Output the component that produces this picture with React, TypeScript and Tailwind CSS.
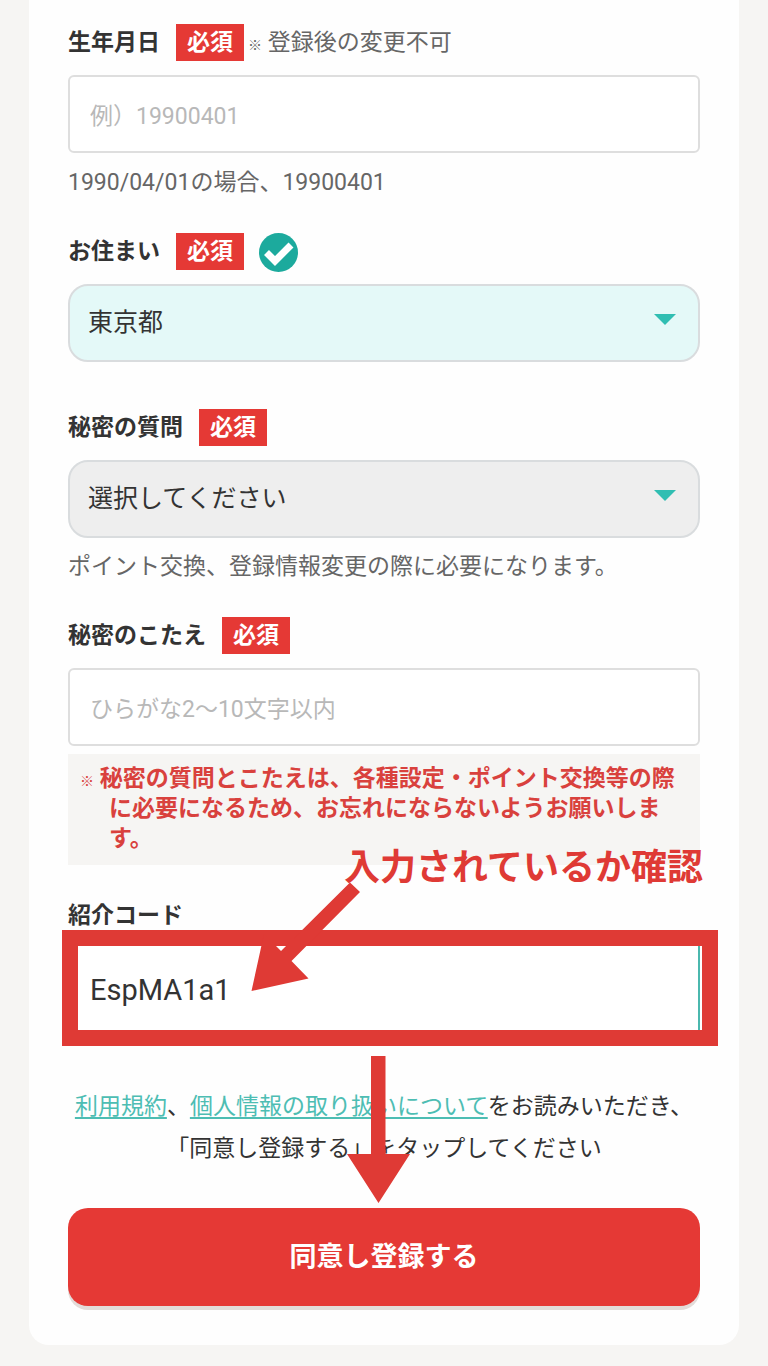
import { useState } from "react";
import type { ReactNode } from "react";

function RequiredBadge() {
  return (
    <span className="flex h-[37px] shrink-0 items-center bg-[#e53935] px-[11px] font-bold text-white">
      必須
    </span>
  );
}

function FieldHeader({ htmlFor, label, children }: { htmlFor: string; label: string; children?: ReactNode }) {
  return (
    <div className="mb-[14px] flex h-[37px] items-center gap-4">
      <label htmlFor={htmlFor} className="font-bold">
        {label}
      </label>
      <div className="flex items-center gap-1">
        <RequiredBadge />
        {children}
      </div>
    </div>
  );
}

function CheckMark() {
  return (
    <svg className="mt-px ml-[11px] h-[39px] w-[39px]" viewBox="0 0 39 39" aria-hidden="true">
      <circle cx="19.5" cy="19.5" r="19.5" fill="#1caa9d" />
      <path d="M7.5 19.5 L16 28 L32 12" fill="none" stroke="#fff" strokeWidth="7" />
    </svg>
  );
}

function SelectArrow() {
  return (
    <svg
      className="pointer-events-none absolute top-[30px] right-6 h-[11px] w-[22px]"
      viewBox="0 0 22 11"
      aria-hidden="true"
    >
      <path d="M0 0 H22 L11 11 Z" fill="#30beb2" />
    </svg>
  );
}

const textInput =
  "block h-[78px] w-full rounded-md border-2 border-[#dedede] bg-white px-5 pt-1 outline-none placeholder:text-[#b8b8b8]";
const selectBox =
  "block h-[78px] w-full appearance-none rounded-[20px] border-2 border-[#d9dcde] px-[18px] text-[25px] outline-none";

export default function App() {
  const [birthday, setBirthday] = useState("");
  const [prefecture, setPrefecture] = useState("東京都");
  const [question, setQuestion] = useState("");
  const [answer, setAnswer] = useState("");
  const [code, setCode] = useState("EspMA1a1");

  return (
    <div
      lang="ja"
      className="overflow-x-hidden bg-[#f6f5f3] px-[29px] pb-[21px] font-[Roboto,'Noto_Sans_CJK_JP',sans-serif] text-[23px] leading-[30px] text-[#333]"
    >
      <form
        className="rounded-b-[20px] bg-[#fefefe] px-[39px] pt-6 pb-[39px]"
        onSubmit={(e) => e.preventDefault()}
      >
        <div>
          <FieldHeader htmlFor="birthday" label="生年月日">
            <span className="text-[#666]">
              <span className="text-[14px] leading-none">※</span> 登録後の変更不可
            </span>
          </FieldHeader>
          <input
            id="birthday"
            className={textInput}
            placeholder="例）19900401"
            value={birthday}
            onChange={(e) => setBirthday(e.target.value)}
          />
          <p className="mt-[15px] text-[#666]">1990/04/01の場合、19900401</p>
        </div>

        <div className="mt-[35px]">
          <FieldHeader htmlFor="prefecture" label="お住まい">
            <CheckMark />
          </FieldHeader>
          <div className="relative">
            <select
              id="prefecture"
              className={`${selectBox} bg-[#e4f9f8]`}
              value={prefecture}
              onChange={(e) => setPrefecture(e.target.value)}
            >
              <option>東京都</option>
            </select>
            <SelectArrow />
          </div>
        </div>

        <div className="mt-[47px]">
          <FieldHeader htmlFor="question" label="秘密の質問" />
          <div className="relative">
            <select
              id="question"
              className={`${selectBox} bg-[#eee]`}
              value={question}
              onChange={(e) => setQuestion(e.target.value)}
            >
              <option value="">選択してください</option>
            </select>
            <SelectArrow />
          </div>
          <p className="mt-[14px] text-[#666]">ポイント交換、登録情報変更の際に必要になります。</p>
        </div>

        <div className="mt-[35px]">
          <FieldHeader htmlFor="answer" label="秘密のこたえ" />
          <input
            id="answer"
            className={textInput}
            placeholder="ひらがな2〜10文字以内"
            value={answer}
            onChange={(e) => setAnswer(e.target.value)}
          />
          <p className="mt-2 bg-[#f6f5f3] pt-[10px] pr-5 pb-[11px] pl-[41px] indent-[-29px] font-bold text-[#d9413d]">
            <span className="text-[14px] leading-none">※</span>{" "}
            秘密の質問とこたえは、各種設定・ポイント交換等の際に必要になるため、お忘れにならないようお願いします。
          </p>
        </div>

        <div className="mt-9">
          <label htmlFor="code" className="block font-bold">
            紹介コード
          </label>
          <div className="relative mt-[9px]">
            <input
              id="code"
              className="block h-24 w-full rounded-md border-2 border-[#4bb8ae] bg-white px-5 pt-1 text-[29px] outline-none"
              value={code}
              onChange={(e) => setCode(e.target.value)}
            />
            {/* highlight frame, arrow and note over the code field */}
            <div className="pointer-events-none absolute -inset-y-[10px] -right-[18px] -left-[6px] border-16 border-[#df3a35]" />
            <svg
              className="pointer-events-none absolute -top-[58px] left-[183px] h-[110px] w-[110px]"
              viewBox="0 0 110 110"
              aria-hidden="true"
            >
              <path d="M0.5 109 L13 52 L30 69 L99 0.5 L109 10 L40.5 79 L57.5 96.5 Z" fill="#df3a35" />
            </svg>
            <p className="pointer-events-none absolute -top-[92px] -right-[3px] text-[36px] leading-10 font-bold whitespace-nowrap text-[#df3a35]">
              入力されているか確認
            </p>
          </div>
        </div>

        <div className="relative mt-[50px]">
          <p className="text-center leading-[42px]">
            <a href="#terms" className="text-[#4dbdb3] underline underline-offset-3">
              利用規約
            </a>
            、
            <a href="#privacy" className="text-[#4dbdb3] underline underline-offset-3">
              個人情報の取り扱いについて
            </a>
            をお読みいただき、
            <br />
            「同意し登録する」をタップしてください
          </p>
          <svg
            className="pointer-events-none absolute -top-[30px] left-[279px] h-[147px] w-[63px]"
            viewBox="0 0 63 147"
            aria-hidden="true"
          >
            <path d="M24 0 H38.5 V98 H63 L31.5 147 L0 98 H24 Z" fill="#df3a35" />
          </svg>
        </div>

        <button
          type="submit"
          className="mt-[38px] block h-[98px] w-full rounded-[20px] bg-[#e53935] text-[27px] font-bold text-white shadow-[0_4px_0_#e3dcd9]"
        >
          同意し登録する
        </button>
      </form>
    </div>
  );
}
